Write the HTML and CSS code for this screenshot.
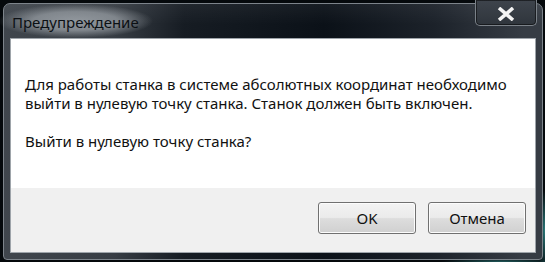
FILE: index.html
```html
<!DOCTYPE html>
<html lang="ru">
<head>
<meta charset="utf-8">
<title>Предупреждение</title>
<link rel="stylesheet" href="styles.css">
</head>
<body>
<div class="window">
  <div class="titlebar">
    <span class="title">Предупреждение</span>
    <div class="close">
      <svg width="18" height="14" viewBox="0 0 18 14"><path d="M2 1 L16 13 M16 1 L2 13" stroke="#f4f4f4" stroke-width="3.6" stroke-linecap="butt"/></svg>
    </div>
  </div>
  <div class="client">
    <div class="content">
      <p class="msg">Для работы станка в системе абсолютных координат необходимо<br>выйти в нулевую точку станка. Станок должен быть включен.</p>
      <p class="msg">Выйти в нулевую точку станка?</p>
    </div>
    <div class="footer">
      <button class="btn">OK</button>
      <button class="btn">Отмена</button>
    </div>
  </div>
</div>
</body>
</html>
```
FILE: styles.css
```css
html, body {
  margin: 0;
  padding: 0;
}
body {
  width: 545px;
  height: 262px;
  overflow: hidden;
  background:
    radial-gradient(ellipse 8px 40px at 545px 230px, rgba(60,170,170,0.7), transparent),
    radial-gradient(ellipse 60px 4px at 500px 262px, rgba(60,170,170,0.5), transparent),
    #05090c;
  font-family: "Noto Sans", "Open Sans", sans-serif;
}
.window {
  box-sizing: border-box;
  margin: 3px 0 0 3px;
  width: 540px;
  height: 257px;
  display: flex;
  flex-direction: column;
  border: 1px solid #7d848b;
  border-radius: 7px 7px 4px 4px;
  background: linear-gradient(90deg, #40464d 0px, #373d44 110px, #161c23 180px, #0b1118 320px, #1c222a 430px, #363c44 520px);
}
.titlebar {
  height: 34px;
  display: flex;
  align-items: flex-start;
  background: linear-gradient(180deg, rgba(255,255,255,0.05), rgba(255,255,255,0) 60%);
  border-radius: 6px 6px 0 0;
}
.title {
  margin: 0 0 0 -6px;
  padding: 9px 14px 7px 14px;
  font-size: 15px;
  line-height: 18px;
  color: #0c1014;
  background: radial-gradient(closest-side, rgba(150,156,162,0.95) 0%, rgba(140,146,152,0.85) 55%, rgba(100,106,112,0) 100%);
}
.close {
  margin: -4px 5px 0 auto;
  width: 62px;
  height: 26px;
  box-sizing: border-box;
  border: 1px solid #7b8289;
  border-top: none;
  border-radius: 0 0 5px 5px;
  background: linear-gradient(180deg, #3e444c, #2f353c);
  box-shadow: inset 0 0 0 1px rgba(0,0,0,0.5);
  display: flex;
  align-items: center;
  justify-content: center;
  padding-top: 3px;
}
.client {
  flex: 1;
  margin: 0 6px 6px 6px;
  display: flex;
  flex-direction: column;
  border: 1px solid #9ea4aa;
  background: #fff;
}
.content {
  flex: 1;
  padding: 36px 15px 0 14px;
}
.msg {
  margin: 0 0 19px 0;
  font-size: 15px;
  line-height: 19px;
  color: #111;
}
.footer {
  height: 64px;
  box-sizing: border-box;
  background: #f0f0f0;
  display: flex;
  justify-content: flex-end;
  align-items: flex-start;
  gap: 12px;
  padding: 14px 9px 0 0;
}
.btn {
  width: 98px;
  height: 32px;
  border: 1px solid #707070;
  border-radius: 3px;
  background: linear-gradient(180deg, #f3f3f3 0%, #ebebeb 48%, #dddddd 52%, #d0d0d0 100%);
  box-shadow: inset 0 0 0 1px #fcfcfc;
  font-family: "Noto Sans", "Open Sans", sans-serif;
  font-size: 15px;
  color: #111;
  padding: 0;
}
```
